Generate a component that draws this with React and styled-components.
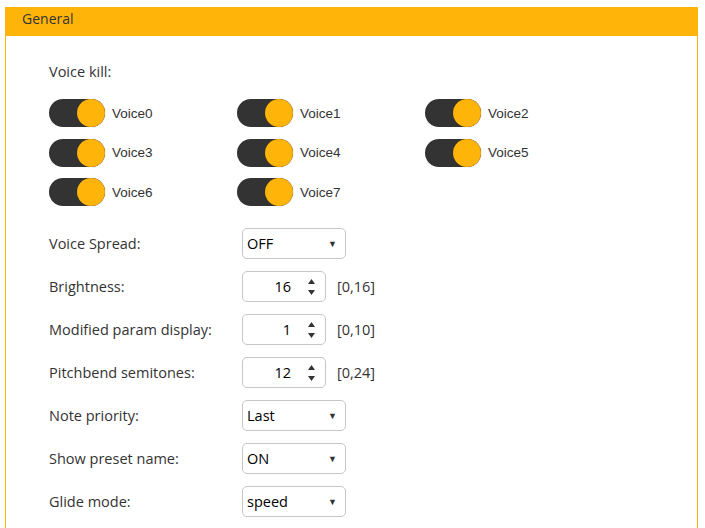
import React from 'react';
import styled, { createGlobalStyle } from 'styled-components';

const Global = createGlobalStyle`
  html, body {
    margin: 0;
    padding: 0;
    background: #fff;
  }
  body {
    font-family: 'Open Sans', 'Noto Sans', sans-serif;
    color: #333;
  }
`;

const Panel = styled.section`
  margin: 7px 0 0 5px;
  width: 693px;
  min-height: 540px;
  border: 1px solid #ffb40a;
  border-top: none;
  box-sizing: border-box;
`;

const Header = styled.header`
  height: 29px;
  box-sizing: border-box;
  background: #ffb40a;
  padding: 2px 0 0 16px;
  font-size: 14px;
  line-height: 19px;
  color: #333;
`;

const Body = styled.div`
  padding: 26px 0 0 43px;
`;

const Title = styled.div`
  font-size: 14.5px;
  line-height: 20px;
  color: #333;
`;

const ToggleGrid = styled.div`
  display: grid;
  grid-template-columns: repeat(3, 188px);
  row-gap: 11.5px;
  margin-top: 17px;
`;

const ToggleItem = styled.label`
  display: flex;
  align-items: center;
  gap: 7px;
  font-family: 'Liberation Sans', Arial, sans-serif;
  font-size: 13.5px;
  color: #333;
`;

const Track = styled.span`
  width: 56px;
  height: 28px;
  border-radius: 14px;
  background: ${(p) => (p.$on ? '#333' : '#ccc')};
  display: flex;
  justify-content: ${(p) => (p.$on ? 'flex-end' : 'flex-start')};
`;

const Knob = styled.span`
  width: 28px;
  height: 28px;
  border-radius: 50%;
  background: #ffb40a;
  box-shadow: 0 0 1px rgba(0, 0, 0, 0.5);
`;

const Form = styled.div`
  display: grid;
  grid-template-columns: 193px auto;
  row-gap: 12px;
  margin-top: 22px;
  align-items: center;
`;

const Label = styled.div`
  font-size: 14.5px;
  color: #333;
`;

const Field = styled.div`
  display: flex;
  align-items: center;
  gap: 11px;
`;

const Box = styled.div`
  box-sizing: border-box;
  height: 31px;
  width: ${(p) => p.$w}px;
  border: 1px solid #c6c6c6;
  border-radius: 5px;
  display: flex;
  align-items: center;
  font-size: 14.5px;
  color: #000;
  background: #fff;
`;

const SelectValue = styled.span`
  flex: 1;
  padding-left: 4px;
`;

const Caret = styled.span`
  font-size: 9px;
  color: #333;
  margin-right: 8px;
`;

const NumValue = styled.span`
  flex: 1;
  text-align: right;
  padding-right: 17px;
`;

const Spinner = styled.span`
  display: flex;
  flex-direction: column;
  align-items: center;
  margin-right: 10px;
  gap: 6px;
  svg {
    display: block;
  }
`;

const Range = styled.span`
  font-size: 14.5px;
  color: #333;
`;

function Toggle({ name }) {
  return (
    <ToggleItem>
      <Track $on>
        <Knob />
      </Track>
      {name}
    </ToggleItem>
  );
}

function Select({ value }) {
  return (
    <Box $w={104}>
      <SelectValue>{value}</SelectValue>
      <Caret>▼</Caret>
    </Box>
  );
}

function NumberInput({ value, range }) {
  return (
    <Field>
      <Box $w={84}>
        <NumValue>{value}</NumValue>
        <Spinner>
          <svg width="7" height="5" viewBox="0 0 7 5">
            <path d="M3.5 0 L7 5 L0 5 Z" fill="#333" />
          </svg>
          <svg width="7" height="5" viewBox="0 0 7 5">
            <path d="M0 0 L7 0 L3.5 5 Z" fill="#333" />
          </svg>
        </Spinner>
      </Box>
      <Range>{range}</Range>
    </Field>
  );
}

const voices = ['Voice0', 'Voice1', 'Voice2', 'Voice3', 'Voice4', 'Voice5', 'Voice6', 'Voice7'];

export default function App() {
  return (
    <>
      <Global />
      <Panel>
        <Header>General</Header>
        <Body>
          <Title>Voice kill:</Title>
          <ToggleGrid>
            {voices.map((v) => (
              <Toggle key={v} name={v} />
            ))}
          </ToggleGrid>
          <Form>
            <Label>Voice Spread:</Label>
            <Select value="OFF" />
            <Label>Brightness:</Label>
            <NumberInput value="16" range="[0,16]" />
            <Label>Modified param display:</Label>
            <NumberInput value="1" range="[0,10]" />
            <Label>Pitchbend semitones:</Label>
            <NumberInput value="12" range="[0,24]" />
            <Label>Note priority:</Label>
            <Select value="Last" />
            <Label>Show preset name:</Label>
            <Select value="ON" />
            <Label>Glide mode:</Label>
            <Select value="speed" />
          </Form>
        </Body>
      </Panel>
    </>
  );
}
